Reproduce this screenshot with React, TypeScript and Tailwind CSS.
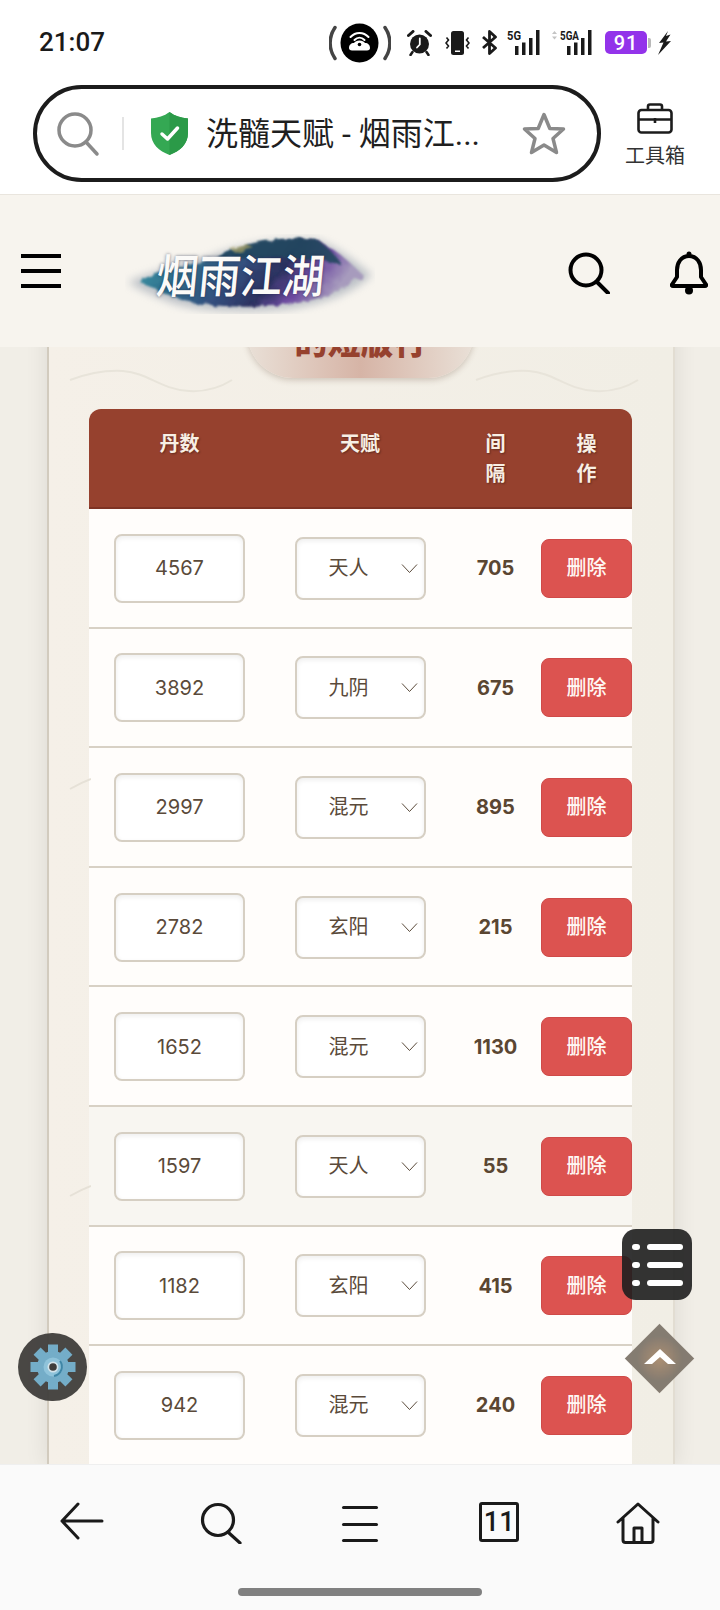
import { useId } from "react";

type Row = { dan: string; talent: string; gap: string };

const rows: Row[] = [
  { dan: "4567", talent: "天人", gap: "705" },
  { dan: "3892", talent: "九阴", gap: "675" },
  { dan: "2997", talent: "混元", gap: "895" },
  { dan: "2782", talent: "玄阳", gap: "215" },
  { dan: "1652", talent: "混元", gap: "1130" },
  { dan: "1597", talent: "天人", gap: "55" },
  { dan: "1182", talent: "玄阳", gap: "415" },
  { dan: "942", talent: "混元", gap: "240" },
];

const talents = ["天人", "九阴", "混元", "玄阳"];

const columns = "grid grid-cols-[181px_180px_91px_91px]";

function StatusIcons() {
  return (
    <div className="ml-auto flex items-center text-[#1a1a1a]">
      <svg width="62" height="40" viewBox="0 0 62 40" fill="none">
        <path d="M6 4.5C-0.5 14 -0.5 26 6 35.5" stroke="#444" strokeWidth="3.5" strokeLinecap="round" />
        <path d="M56 4.5C62.5 14 62.5 26 56 35.5" stroke="#444" strokeWidth="3.5" strokeLinecap="round" />
        <ellipse cx="30.5" cy="20" rx="19" ry="19.5" fill="#000" />
        <path d="M20 25c0-3 2-5 5-5 1-1.500 3-2.500 5.500-2.500s4.500 1 5.500 2.500c3 0 5 2 5 5 0 1.500-1 2.500-3 2.500H23c-2 0-3-1-3-2.500z" fill="#fff" />
        <path d="M21.500 14c5-5.500 13-5.500 18 0M25.500 17c3-3 7-3 10 0" stroke="#fff" strokeWidth="2" strokeLinecap="round" />
        <circle cx="30.500" cy="21.500" r="1.800" fill="#000" />
      </svg>
      <svg className="ml-[16px]" width="25" height="26" viewBox="0 0 25 26" fill="none">
        <circle cx="12.500" cy="14" r="9.500" fill="#1a1a1a" />
        <path d="M1.500 5.500 6 1.500M23.500 5.500 19 1.500" stroke="#1a1a1a" strokeWidth="3" strokeLinecap="round" />
        <path d="M5.500 22 3.500 25M19.500 22l2 3" stroke="#1a1a1a" strokeWidth="2.500" strokeLinecap="round" />
        <path d="M12.800 8.500V14.500L10 17.500" stroke="#fff" strokeWidth="1.800" strokeLinecap="round" />
      </svg>
      <svg className="ml-[13px]" width="25" height="24" viewBox="0 0 25 24" fill="none">
        <rect x="6" y="0" width="13" height="24" rx="2.500" fill="#1a1a1a" />
        <rect x="10" y="19.500" width="5" height="1.500" fill="#fff" />
        <path d="M1.500 6.500 3.500 9 1 12l2.500 3-2 2.500M23.500 6.500 21.500 9l2.500 3-2.500 3 2 2.500" stroke="#1a1a1a" strokeWidth="1.600" />
      </svg>
      <svg className="ml-[11px]" width="17" height="25" viewBox="0 0 17 25" fill="none">
        <path d="M2 7 14.500 18 8.500 23.500V1.500L14.500 7 2 18" stroke="#1a1a1a" strokeWidth="2.800" strokeLinejoin="round" />
      </svg>
      <svg className="-mt-[6px] ml-[9px]" width="33" height="31" viewBox="0 -6 33 31">
        <text x="0" y="10" fontFamily="Roboto" fontSize="13" fontWeight="700" fill="#1a1a1a" textLength="14" lengthAdjust="spacingAndGlyphs">5G</text>
        <rect x="8" y="16" width="3.500" height="9" fill="#1a1a1a" />
        <rect x="15" y="12.500" width="3.500" height="12.500" fill="#1a1a1a" />
        <rect x="22" y="8" width="3.500" height="17" fill="#1a1a1a" />
        <rect x="29" y="0" width="3.500" height="25" fill="#1a1a1a" />
      </svg>
      <svg className="-mt-[6px] ml-[12px]" width="40" height="31" viewBox="0 -6 40 31">
        <path d="M0 4 2.500 1 5 4zM0 6.500 2.500 9.500 5 6.500z" fill="#c4c4c4" />
        <text x="8" y="10" fontFamily="Roboto" fontSize="13" fontWeight="700" fill="#1a1a1a" textLength="19" lengthAdjust="spacingAndGlyphs">5GA</text>
        <rect x="15" y="16" width="3.500" height="9" fill="#1a1a1a" />
        <rect x="22" y="12.500" width="3.500" height="12.500" fill="#1a1a1a" />
        <rect x="29" y="8" width="3.500" height="17" fill="#1a1a1a" />
        <rect x="36" y="0" width="3.500" height="25" fill="#1a1a1a" />
      </svg>
      <div className="ml-[13px] flex items-center">
        <span className="flex h-[23px] w-[42px] items-center justify-center rounded-[5px] bg-[#9333ea] font-['Roboto'] text-[20px] font-medium tracking-[1px] text-white">
          91
        </span>
        <span className="ml-[1px] h-[10px] w-[3px] rounded-r-[2px] bg-[#b9b9b9]" />
      </div>
      <svg className="ml-[7px]" width="14" height="24" viewBox="0 0 14 24">
        <path d="M10 0 1 12l4.500-.5L0 24l13-14-5 .5 4.500-7L8 5z" fill="#1a1a1a" />
      </svg>
    </div>
  );
}

function BrowserBar() {
  return (
    <div className="flex h-[119px] bg-white pl-[33px] font-['Roboto','Noto_Sans_CJK_SC',sans-serif]">
      <div className="mt-[10px] flex h-[97px] w-[568px] items-center rounded-full border-4 border-[#1c1c1c] pl-[19px]">
        <svg width="44" height="46" viewBox="0 0 44 46" fill="none" stroke="#8a8a8a" strokeWidth="3.500" strokeLinecap="round">
          <circle cx="19" cy="19" r="16" />
          <path d="M30 31 41 43" />
        </svg>
        <span className="ml-[22px] h-[33px] w-[2px] bg-[#e4e4e4]" />
        <svg className="ml-[27px]" width="37" height="43" viewBox="0 0 37 43">
          <path d="M18.500 0C24 4 30 6 37 6.500V21C37 32 29 39 18.500 43 8 39 0 32 0 21V6.500C7 6 13 4 18.500 0z" fill="#34a853" />
          <path d="M18.500 0C24 4 30 6 37 6.500V21C37 32 29 39 18.500 43z" fill="#2b9a48" />
          <path d="M11 22l5.500 5L26.500 16" fill="none" stroke="#fff" strokeWidth="3.500" strokeLinecap="round" strokeLinejoin="round" />
        </svg>
        <span className="ml-[18px] w-[290px] text-[32px] leading-none whitespace-nowrap text-[#1f1f1f]">洗髓天赋 - 烟雨江...</span>
        <svg className="ml-[26px]" width="44" height="43" viewBox="0 0 44 43" fill="none" stroke="#8a8a8a" strokeWidth="3.500" strokeLinejoin="round">
          <path d="M22 2.500 27.800 16.500 41.500 17 31 26.500 34.500 40.500 22 33 9.500 40.500 13 26.500 2.500 17 16.200 16.500z" />
        </svg>
      </div>
      <div className="ml-[16px] flex w-[76px] flex-col items-center pt-[28px]">
        <svg width="36" height="31" viewBox="0 0 36 31" fill="none" stroke="#1c1c1c" strokeWidth="2.600" strokeLinejoin="round">
          <rect x="1.500" y="7" width="33" height="22.500" rx="3" />
          <path d="M11 7V3.500C11 2 12 1.500 13 1.500H23C24 1.500 25 2 25 3.500V7M1.500 16.500H34.500M18 15V20" />
        </svg>
        <span className="mt-[10px] text-[20px] leading-[24px] text-[#333]">工具箱</span>
      </div>
    </div>
  );
}

function Logo() {
  const id = useId().replace(/:/g, "");
  return (
    <div className="relative mt-[6px] ml-[64px] h-[80px] w-[250px]">
      <svg width="250" height="80" viewBox="0 0 250 80" className="absolute inset-0">
        <defs>
          <linearGradient id={`${id}ink`} x1="0" x2="1" y1="0" y2="0.25">
            <stop offset="0" stopColor="#9dbcc0" />
            <stop offset="0.12" stopColor="#3a8ca0" />
            <stop offset="0.3" stopColor="#2f6f8c" />
            <stop offset="0.52" stopColor="#34507f" />
            <stop offset="0.7" stopColor="#2c3260" />
            <stop offset="0.84" stopColor="#6d4ba0" />
            <stop offset="1" stopColor="#a79bbd" />
          </linearGradient>
          <filter id={`${id}rough`} x="-10%" y="-20%" width="120%" height="140%">
            <feTurbulence type="fractalNoise" baseFrequency="0.09" numOctaves="3" seed="4" />
            <feDisplacementMap in="SourceGraphic" scale="8" />
            <feGaussianBlur stdDeviation="1" />
          </filter>
          <filter id={`${id}haze`} x="-10%" y="-30%" width="120%" height="160%">
            <feGaussianBlur stdDeviation="4" />
          </filter>
        </defs>
        <path d="M3 48C30 36 60 30 85 23 110 10 170 2 192 6 215 14 230 28 247 41 228 58 205 68 170 74 130 80 70 78 45 68 30 62 15 56 3 48Z" fill="#8e99a8" opacity="0.55" filter={`url(#${id}haze)`} />
        <path d="M14 47C35 36 62 32 88 25 112 10 168 2 190 6 212 15 226 30 238 41 222 56 200 64 168 70 130 75 74 73 50 64 36 58 24 53 14 47Z" fill={`url(#${id}ink)`} filter={`url(#${id}rough)`} />
        <path d="M85 26C105 12 150 1 190 5 202 12 210 20 216 30 170 22 120 22 85 26Z" fill="#24465e" opacity="0.9" filter={`url(#${id}rough)`} />
        <path d="M104 14l16-4 8 3-18 5z" fill="#a8a060" opacity="0.7" filter={`url(#${id}rough)`} />
      </svg>
      <span className="absolute top-[11px] left-[32px] -skew-x-6 scale-y-110 font-['Noto_Sans_CJK_SC',sans-serif] text-[42px] leading-[56px] font-medium whitespace-nowrap text-[#fbfaf8] [text-shadow:0_0_3px_rgba(20,30,60,0.6)]">
        烟雨江湖
      </span>
    </div>
  );
}

function SiteHeader() {
  return (
    <header className="flex h-[153px] items-center border-t border-[#e9e5de] bg-[#f7f4ee] pl-[21px]">
      <div className="flex w-[40px] flex-col gap-[11px]">
        <span className="h-[4px] bg-black" />
        <span className="h-[4px] bg-black" />
        <span className="h-[4px] bg-black" />
      </div>
      <Logo />
      <svg className="mt-[4px] ml-[193px]" width="42" height="42" viewBox="0 0 42 42" fill="none" stroke="#000" strokeWidth="4" strokeLinecap="round">
        <circle cx="18" cy="18" r="15.500" />
        <path d="M29 30 40 41" />
      </svg>
      <svg className="mt-[4px] ml-[60px]" width="38" height="44" viewBox="0 0 38 44" fill="none" stroke="#000" strokeWidth="4" strokeLinejoin="round">
        <path d="M19 5C11 5 7 12 7 19V26L2 33.500C1.500 34.500 2 35 3 35H35C36 35 36.500 34.500 36 33.500L31 26V19C31 12 27 5 19 5Z" />
        <circle cx="19" cy="39.500" r="4" fill="#000" stroke="none" />
        <circle cx="19" cy="3" r="2.500" fill="#000" stroke="none" />
      </svg>
    </header>
  );
}

function Wave({ className }: { className: string }) {
  return (
    <svg className={className} width="164" height="24" viewBox="0 0 164 24" fill="none">
      <path d="M1 11C20 4 38 1 54 2 80 4 90 20 120 22 138 23 152 18 163 11" stroke="#e8e4da" strokeWidth="2" />
    </svg>
  );
}

function TableRow({ row, index }: { row: Row; index: number }) {
  return (
    <div
      className={`${columns} h-[119.6px] items-center border-b-2 border-[#d8d1c5] pt-[1px] ${
        index === 5 ? "bg-[#f8f6f1]" : "bg-[#fffdfb]"
      }`}
    >
      <div className="flex justify-center">
        <input
          readOnly
          value={row.dan}
          className="h-[69px] w-[131px] rounded-[8px] border-2 border-[#d6cfc3] bg-white text-center text-[20px] text-[#5a4a3a] shadow-[inset_0_2px_5px_rgba(0,0,0,0.07)] outline-none"
        />
      </div>
      <div className="flex justify-center">
        <div className="relative h-[63px] w-[131px]">
          <select
            defaultValue={row.talent}
            className="h-full w-full appearance-none rounded-[8px] border-2 border-[#d6cfc3] bg-white pl-[32px] text-[20px] text-[#5a4a3a] shadow-[inset_0_2px_5px_rgba(0,0,0,0.07)] outline-none"
          >
            {talents.map((t) => (
              <option key={t}>{t}</option>
            ))}
          </select>
          <svg className="pointer-events-none absolute top-[26px] left-[106px]" width="17" height="11" viewBox="0 0 17 11" fill="none" stroke="#5a4a3a" strokeWidth="1">
            <path d="M1 1.500 8.500 9.500 16 1.500" />
          </svg>
        </div>
      </div>
      <div className="text-center text-[20px] font-bold text-[#5a4632]">{row.gap}</div>
      <div className="flex justify-end">
        <button className="h-[59px] w-[91px] rounded-[8px] border border-[#cf4a48] bg-[#dc5350] text-[20px] font-medium text-[#fff8f4]">
          删除
        </button>
      </div>
    </div>
  );
}

function ScoreTable() {
  return (
    <div className="w-[543px]">
      <div className={`${columns} h-[100px] rounded-t-[12px] border-b-2 border-[#7e3324] bg-[#96412e] pt-[21px] text-center text-[20px] leading-[29.500px] font-semibold text-[#f8efe4] [text-shadow:1px_1px_2px_rgba(0,0,0,0.35)]`}>
        <div>丹数</div>
        <div>天赋</div>
        <div className="mx-auto w-[20px]">间隔</div>
        <div className="mx-auto w-[20px]">操作</div>
      </div>
      {rows.map((row, i) => (
        <TableRow key={row.dan} row={row} index={i} />
      ))}
    </div>
  );
}

function Content() {
  return (
    <main className="min-h-0 flex-1 overflow-hidden bg-[#f1eee7] font-['Inter','Noto_Sans_CJK_SC',sans-serif]">
      <div className="relative -mt-[100px] ml-[47px] w-[628px] border-x-2 border-l-[#d2cbbe] border-r-[#e2ddd2] bg-gradient-to-r from-[#f5f0e8] to-[#f1eee5] pt-[41px] pl-[40px] shadow-[0_0_22px_rgba(0,0,0,0.09)]">
        <Wave className="absolute top-[122px] left-[20px]" />
        <Wave className="absolute top-[122px] left-[426px]" />
        <svg className="absolute top-[531px] left-[20px]" width="22" height="12" viewBox="0 0 22 12" fill="none">
          <path d="M1 11C8 7 14 4 22 1" stroke="#e6e1d7" strokeWidth="2" />
        </svg>
        <svg className="absolute top-[938px] left-[20px]" width="22" height="12" viewBox="0 0 22 12" fill="none">
          <path d="M1 11C8 7 14 4 22 1" stroke="#e6e1d7" strokeWidth="2" />
        </svg>
        <div className="mb-[31px] ml-[158px] flex h-[90px] w-[227px] items-center justify-center rounded-b-[46px] bg-gradient-to-r from-[#e9e0d7] via-[#d6b4a6] to-[#e9e0d7] pt-[19px] text-[33px] font-black whitespace-nowrap text-[#96412e] shadow-[0_2px_6px_rgba(90,60,40,0.25)]">
          的短版行
        </div>
        <ScoreTable />
      </div>
    </main>
  );
}

function BottomNav() {
  return (
    <nav className="flex h-[146px] flex-col border-t border-[#efefef] bg-[#fafafa]">
      <div className="grid h-[123px] grid-cols-5 items-start px-[12px] pt-[37px]">
        <div className="flex justify-center">
          <svg width="44" height="38" viewBox="0 0 44 38" fill="none" stroke="#1a1a1a" strokeWidth="3" strokeLinecap="round" strokeLinejoin="round">
            <path d="M18 2 2 19 18 36M2 19H42" />
          </svg>
        </div>
        <div className="flex justify-center">
          <svg width="42" height="42" viewBox="0 0 42 42" fill="none" stroke="#1a1a1a" strokeWidth="3.200" strokeLinecap="round">
            <circle cx="18" cy="18" r="15.500" />
            <path d="M29 31 40 41" />
          </svg>
        </div>
        <div className="flex justify-center pt-[4px]">
          <div className="flex w-[36px] flex-col gap-[13.500px]">
            <span className="h-[3px] rounded-full bg-[#1a1a1a]" />
            <span className="h-[3px] rounded-full bg-[#1a1a1a]" />
            <span className="h-[3px] rounded-full bg-[#1a1a1a]" />
          </div>
        </div>
        <div className="flex justify-center">
          <span className="flex h-[40px] w-[40px] items-center justify-center rounded-[3px] border-[3px] border-[#1a1a1a] font-['Roboto'] text-[27px] leading-none font-medium text-[#1a1a1a]">
            11
          </span>
        </div>
        <div className="flex justify-center">
          <svg width="44" height="42" viewBox="0 0 44 42" fill="none" stroke="#1a1a1a" strokeWidth="3" strokeLinecap="round" strokeLinejoin="round">
            <path d="M2 20 22 2 42 20M7 16V38C7 39.500 8 40.500 9.500 40.500H34.500C36 40.500 37 39.500 37 38V16M18 40V26H26V40" />
          </svg>
        </div>
      </div>
      <span className="mx-auto h-[8px] w-[244px] rounded-full bg-[#808080]" />
    </nav>
  );
}

function Gear() {
  const teeth = [0, 45, 90, 135, 180, 225, 270, 315];
  return (
    <svg width="46" height="46" viewBox="0 0 46 46">
      {teeth.map((deg) => (
        <rect key={deg} x="18" y="0.500" width="10" height="12" fill="#74adc8" transform={`rotate(${deg} 23 23)`} />
      ))}
      <circle cx="23" cy="23" r="16" fill="#74adc8" />
      <circle cx="23" cy="23" r="9.500" fill="#8fc3da" />
      <path d="M30 17a9.500 9.500 0 0 1-6 15" fill="none" stroke="#3f86a6" strokeWidth="2" />
      <circle cx="23" cy="23" r="5.500" fill="#d3e3ea" />
      <circle cx="23" cy="23" r="3.800" fill="#3f3d3b" />
    </svg>
  );
}

function FloatingButtons() {
  return (
    <>
      <button className="absolute top-[1333px] left-[18px] flex h-[68px] w-[69px] items-center justify-center rounded-full bg-[#3f3d3b]/95">
        <Gear />
      </button>
      <button className="absolute top-[1229px] left-[622px] flex h-[71px] w-[70px] flex-col justify-center gap-[12px] rounded-[14px] bg-[#1e1e1e]/90 pl-[10px]">
        {[0, 1, 2].map((i) => (
          <span key={i} className="flex items-center gap-[7px]">
            <span className="h-[6px] w-[8px] rounded-full bg-white" />
            <span className="h-[6px] w-[36px] rounded-full bg-white" />
          </span>
        ))}
      </button>
      <button className="absolute top-[1334px] left-[635px] flex h-[49px] w-[49px] rotate-45 items-center justify-center bg-[radial-gradient(circle,#a98a6c_0%,#7f766b_65%)] opacity-95 blur-[0.6px]" />
      <svg className="absolute top-[1349px] left-[644px]" width="32" height="16" viewBox="0 0 32 16">
        <path d="M16 0 32 15H24L16 8 8 15H0z" fill="#fff" />
      </svg>
    </>
  );
}

export default function App() {
  return (
    <div className="relative flex h-[1610px] w-[720px] flex-col overflow-hidden bg-white">
      <div className="flex h-[75px] items-center bg-white pt-[10px] pr-[48px] pl-[39px] font-['Roboto',sans-serif]">
        <span className="text-[26px] font-medium text-[#1a1a1a]">21:07</span>
        <StatusIcons />
      </div>
      <BrowserBar />
      <SiteHeader />
      <Content />
      <BottomNav />
      <FloatingButtons />
    </div>
  );
}
